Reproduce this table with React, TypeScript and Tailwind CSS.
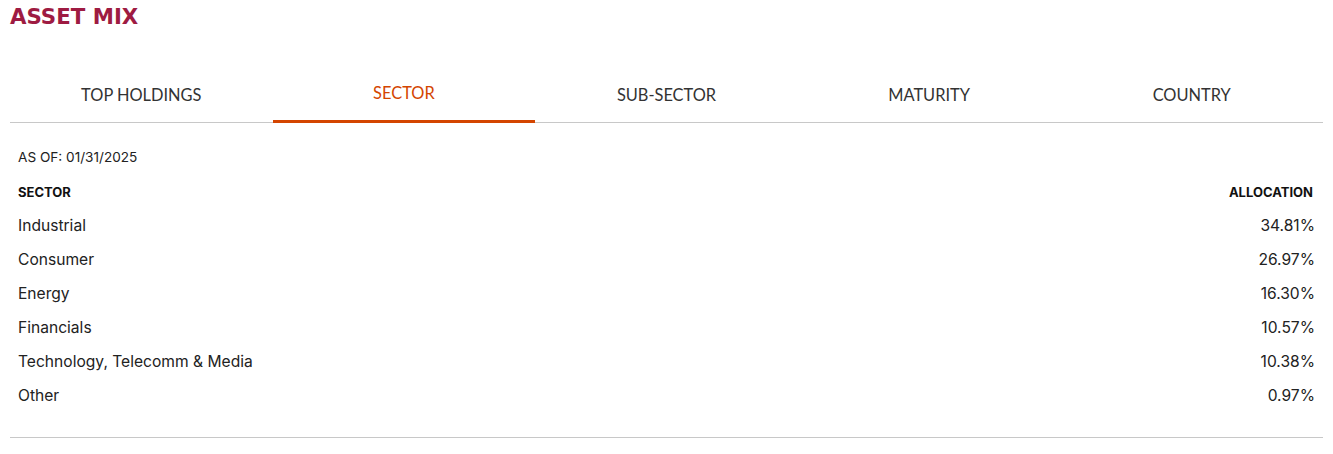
const tabs = ["TOP HOLDINGS", "SECTOR", "SUB-SECTOR", "MATURITY", "COUNTRY"];

const rows: [string, string][] = [
  ["Industrial", "34.81%"],
  ["Consumer", "26.97%"],
  ["Energy", "16.30%"],
  ["Financials", "10.57%"],
  ["Technology, Telecomm & Media", "10.38%"],
  ["Other", "0.97%"],
];

export default function App() {
  return (
    <div className="min-h-[454px] bg-white px-[10px] pt-[4px] font-['Inter',sans-serif] text-[#222]">
      <h1 className="font-['DejaVu_Sans',sans-serif] text-[21.3px] font-bold leading-[26px] text-[#9e1b42]">
        ASSET MIX
      </h1>

      <div className="mt-[40px] grid grid-cols-5 border-b border-[#c8c8c8]">
        {tabs.map((tab) => {
          const active = tab === "SECTOR";
          return (
            <div
              key={tab}
              className={
                active
                  ? "-mb-px flex h-[53px] items-start justify-center border-b-[3px] border-[#d44500] pt-[11px] font-['Lato',sans-serif] text-[16.4px] text-[#d44500]"
                  : "flex h-[52px] items-start justify-center pt-[13px] font-['Lato',sans-serif] text-[16.4px] text-[#333]"
              }
            >
              {tab}
            </div>
          );
        })}
      </div>

      <div className="px-[8px] pb-[24px] pt-[26px]">
        <p className="text-[13.6px] leading-[16px] text-[#222]">AS OF: 01/31/2025</p>
        <div className="mt-[19px] flex justify-between pr-[2px] text-[13px] font-bold leading-[16px] text-[#111]">
          <span>SECTOR</span>
          <span>ALLOCATION</span>
        </div>
        <div className="mt-[9px]">
          {rows.map(([name, pct]) => (
            <div key={name} className="flex h-[34px] items-center justify-between text-[15.6px] text-[#222]">
              <span>{name}</span>
              <span>{pct}</span>
            </div>
          ))}
        </div>
      </div>

      <div className="border-b border-[#c8c8c8]" />
    </div>
  );
}
